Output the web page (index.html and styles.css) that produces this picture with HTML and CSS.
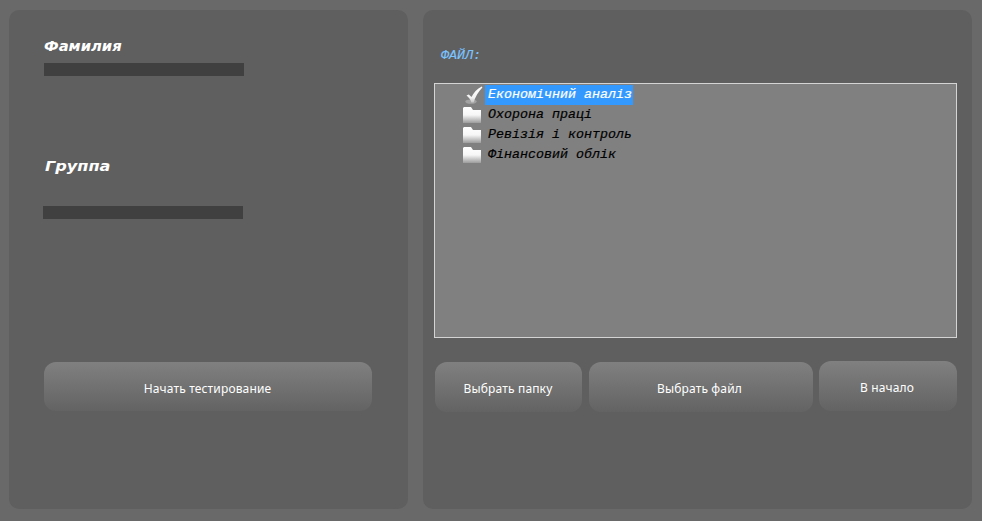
FILE: index.html
```html
<!DOCTYPE html>
<html lang="ru">
<head>
<meta charset="utf-8">
<title>Тестирование</title>
<link rel="stylesheet" href="styles.css">
</head>
<body>
<svg class="defs" width="0" height="0" aria-hidden="true">
  <defs>
    <linearGradient id="fg" x1="0" y1="0" x2="0" y2="1">
      <stop offset="0" stop-color="#ffffff"/>
      <stop offset="0.5" stop-color="#f6f6f6"/>
      <stop offset="1" stop-color="#9c9c9c"/>
    </linearGradient>
    <linearGradient id="cg" x1="0" y1="0" x2="0" y2="1">
      <stop offset="0" stop-color="#ffffff"/>
      <stop offset="0.7" stop-color="#f2f2f2"/>
      <stop offset="1" stop-color="#c4c4c4"/>
    </linearGradient>
    <symbol id="folder" viewBox="0 0 18 16">
      <path d="M0 1 1 0H8L10 3H18V16H0Z" fill="url(#fg)"/>
    </symbol>
    <symbol id="check" viewBox="0 0 18 18">
      <ellipse cx="6" cy="15.6" rx="5.8" ry="2.2" fill="#a2a2a2"/>
      <path d="M1.5 9.5 3.8 8.5 6.5 11C8.5 6.8 12 3 16.8 .5L17.4 1.4C13.4 5.5 10.4 10.5 8.6 16.4H6.4C5.4 13.5 3.8 11.2 1.5 9.5Z" fill="url(#cg)"/>
    </symbol>
  </defs>
</svg>
<main class="app">
  <section class="panel panel-left">
    <div class="field-label first">Фамилия</div>
    <div class="input input-name"></div>
    <div class="field-label second">Группа</div>
    <div class="input input-group"></div>
    <button class="btn btn-start"><span>Начать тестирование</span></button>
  </section>
  <section class="panel panel-right">
    <div class="file-label">ФАЙЛ:</div>
    <div class="list">
      <div class="row"><svg class="ico ico-check"><use href="#check"/></svg><span class="name selected">Економічний аналіз</span></div>
      <div class="row"><svg class="ico"><use href="#folder"/></svg><span class="name">Охорона праці</span></div>
      <div class="row"><svg class="ico"><use href="#folder"/></svg><span class="name">Ревізія і контроль</span></div>
      <div class="row"><svg class="ico"><use href="#folder"/></svg><span class="name">Фінансовий облік</span></div>
    </div>
    <div class="actions">
      <button class="btn btn-folder"><span>Выбрать папку</span></button>
      <button class="btn btn-file"><span>Выбрать файл</span></button>
      <button class="btn btn-home"><span>В начало</span></button>
    </div>
  </section>
</main>
</body>
</html>
```
FILE: styles.css
```css
html, body { margin: 0; height: 100%; }
body { background: #696969; overflow: hidden; }
.defs { position: absolute; }
.app { display: flex; gap: 15px; height: 521px; box-sizing: border-box; padding: 10px 10px 12px 9px; }
.panel { background: #5f5f5f; border-radius: 10px; box-sizing: border-box; display: flex; flex-direction: column; align-items: flex-start; }
.panel-left { width: 399px; padding: 0 35px; }
.panel-right { width: 549px; padding: 0 15px 0 11px; }
.field-label { font: italic bold 14px/18px "DejaVu Sans", sans-serif; color: #fff; transform-origin: left center; }
.field-label.first { margin-top: 27px; transform: scaleX(1.055); }
.field-label.second { margin-top: 81px; margin-left: 1px; transform: scaleX(1.15); }
.input { width: 200px; height: 13px; background: #404040; }
.input-name { margin-top: 8px; }
.input-group { margin-top: 31px; margin-left: -1px; }
.btn { border: 0; padding: 3px 0 0; border-radius: 12px; color: #fff; font: 12px "Noto Sans", sans-serif; letter-spacing: .15px; background: linear-gradient(#808080, #636363); }
.btn-start { width: 328px; height: 49px; margin-top: 143px; padding-right: 1px; }
.file-label { font: italic 13.33px/16px "Liberation Mono", monospace; -webkit-text-stroke: .15px #7cc4ff; color: #7cc4ff; margin: 38px 0 0 7px; height: 19px; }
.list { width: 523px; height: 255px; margin-top: 16px; box-sizing: border-box; border: 1px solid #d4d4d4; background: #808080; padding: 1px 0 0 28px; }
.row { display: flex; align-items: center; height: 20px; }
.ico { width: 18px; height: 16px; margin-right: 4px; flex: none; }
.ico-check { height: 18px; margin-left: 2px; margin-right: 2px; }
.name { font: italic 13.33px/20px "Liberation Mono", monospace; -webkit-text-stroke: .2px currentColor; color: #000; padding: 0 1px 0 3px; }
.selected { background: #3399ff; color: #fff; }
.actions { display: flex; align-items: flex-start; gap: 6px; margin: 23px 0 0 1px; }
.btn-folder { width: 147px; height: 50px; margin: 1px 1px 0 0; padding-right: 1px; }
.btn-file { width: 224px; height: 50px; margin-top: 1px; padding-right: 3px; }
.btn-home { width: 138px; height: 50px; padding-right: 2px; }
```
